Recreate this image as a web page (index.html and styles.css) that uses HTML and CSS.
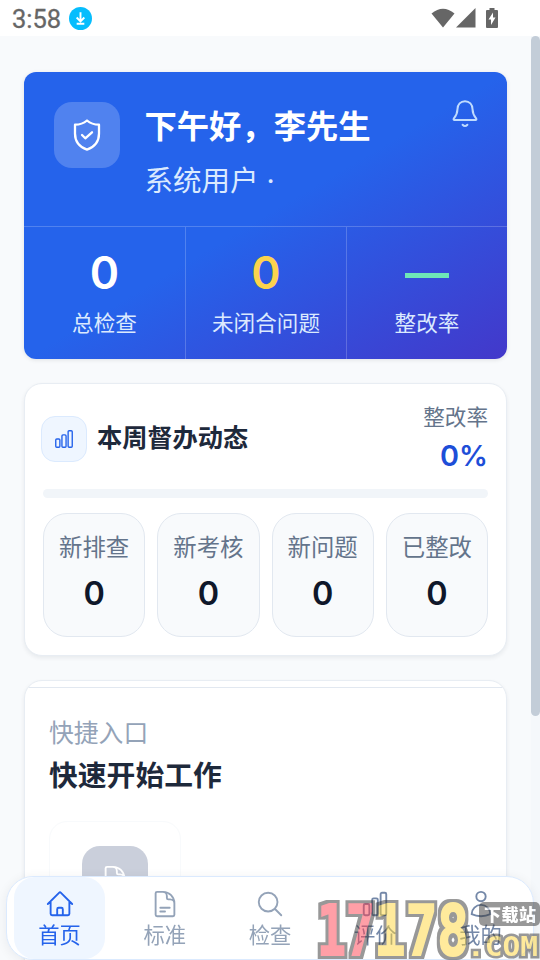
FILE: index.html
```html
<!DOCTYPE html>
<html lang="zh-CN">
<head>
<meta charset="utf-8">
<title>首页</title>
<link rel="stylesheet" href="styles.css">
</head>
<body>
<svg class="defs" width="0" height="0">
  <symbol id="chart" viewBox="0 0 24 24"><path d="M3 13.125C3 12.504 3.504 12 4.125 12h2.25c.621 0 1.125.504 1.125 1.125v6.75C7.5 20.496 6.996 21 6.375 21h-2.25A1.125 1.125 0 0 1 3 19.875v-6.75ZM9.75 8.625c0-.621.504-1.125 1.125-1.125h2.25c.621 0 1.125.504 1.125 1.125v11.25c0 .621-.504 1.125-1.125 1.125h-2.25a1.125 1.125 0 0 1-1.125-1.125V8.625ZM16.5 4.125c0-.621.504-1.125 1.125-1.125h2.25C20.496 3 21 3.504 21 4.125v15.75c0 .621-.504 1.125-1.125 1.125h-2.25a1.125 1.125 0 0 1-1.125-1.125V4.125Z"/></symbol>
  <symbol id="document" viewBox="0 0 24 24"><path d="M19.5 14.25v-2.625a3.375 3.375 0 0 0-3.375-3.375h-1.5A1.125 1.125 0 0 1 13.5 7.125v-1.5a3.375 3.375 0 0 0-3.375-3.375H8.25m0 12.75h7.5m-7.5 3H12M10.5 2.25H5.625c-.621 0-1.125.504-1.125 1.125v17.25c0 .621.504 1.125 1.125 1.125h12.75c.621 0 1.125-.504 1.125-1.125V11.25a9 9 0 0 0-9-9Z"/></symbol>
</svg>

<header class="status">
  <span class="time">3:58</span>
  <svg class="download" viewBox="0 0 24 24"><circle cx="12" cy="12" r="12"/><path d="M12 5.5v9M8 11l4 4 4-4M8 17.5h8"/></svg>
  <div class="signals">
    <svg width="24" height="20" viewBox="0 0 24 20"><path d="M0.500 5.500Q12-4 23.500 5.500L12 19.500Z"/></svg>
    <svg width="20" height="20" viewBox="0 0 20 20"><path d="M0 19.500 19.500 0v19.500Z"/></svg>
    <svg class="battery" width="12" height="20" viewBox="0 0 12 20"><path fill-rule="evenodd" d="M3.500 0h5v2H11q1 0 1 1v16q0 1-1 1H1q-1 0-1-1V3q0-1 1-1h2.500ZM7 4.500 2.500 11.500H5V17L9.500 9.500H7Z"/></svg>
  </div>
</header>

<main class="page">
  <section class="hero">
    <div class="welcome">
      <div class="shield">
        <svg class="icon" viewBox="0 0 36 36"><path d="M18 3.500C14.500 6.500 11 7.700 6 7.700V16.500C6 24 10.500 30 18 32.600C25.500 30 30 24 30 16.500V7.700C25 7.700 21.500 6.500 18 3.500ZM13 18l3.300 3.300L23 15.300"/></svg>
      </div>
      <div class="greeting"><h1>下午好，李先生</h1><p>系统用户 ·</p></div>
      <svg class="icon bell" viewBox="0 0 30 30"><path d="M15 2.200C10.500 2.200 7.700 5.500 7.500 10C7.400 14.500 6.500 16.300 3.900 19.300Q3 20.900 4.600 20.900H25.400Q27 20.900 26.100 19.300C23.500 16.300 22.600 14.500 22.500 10C22.300 5.500 19.500 2.200 15 2.200ZM12.600 25.700Q15 28.300 17.400 25.700"/></svg>
    </div>
    <div class="stats">
      <div><b>0</b><span>总检查</span></div>
      <div><b class="amber">0</b><span>未闭合问题</span></div>
      <div><b class="green"><i></i></b><span>整改率</span></div>
    </div>
  </section>

  <section class="card weekly">
    <div class="weekly-head">
      <div class="chip"><svg class="icon"><use href="#chart"/></svg></div>
      <h2>本周督办动态</h2>
      <div class="rate"><span>整改率</span><b>0%</b></div>
    </div>
    <div class="progress"></div>
    <div class="tiles">
      <div><span>新排查</span><b>0</b></div>
      <div><span>新考核</span><b>0</b></div>
      <div><span>新问题</span><b>0</b></div>
      <div><span>已整改</span><b>0</b></div>
    </div>
  </section>

  <section class="card quick">
    <div class="quick-body">
      <p>快捷入口</p>
      <h2>快速开始工作</h2>
      <div class="entry"><div class="entry-icon"><svg class="icon"><use href="#document"/></svg></div></div>
    </div>
  </section>
</main>
<div class="scroll-track"><div class="thumb"></div></div>

<nav class="tabs">
  <a class="active"><svg class="icon" viewBox="0 0 24 24"><path d="m2.250 12 8.954-8.955c.440-.439 1.152-.439 1.591 0L21.750 12M4.500 9.750v10.125c0 .621.504 1.125 1.125 1.125H9.750v-4.875c0-.621.504-1.125 1.125-1.125h2.250c.621 0 1.125.504 1.125 1.125V21h4.125c.621 0 1.125-.504 1.125-1.125V9.750M9.750 21h4.500"/></svg>首页</a>
  <a><svg class="icon"><use href="#document"/></svg>标准</a>
  <a><svg class="icon" viewBox="0 0 24 24"><path d="m21 21-5.197-5.197m0 0A7.500 7.500 0 1 0 5.196 5.196a7.500 7.500 0 0 0 10.607 10.607Z"/></svg>检查</a>
  <a class="dark"><svg class="icon"><use href="#chart"/></svg>评价</a>
  <a class="dark"><svg class="icon" viewBox="0 0 24 24"><path d="M15.750 6a3.750 3.750 0 1 1-7.500 0 3.750 3.750 0 0 1 7.500 0ZM4.501 20.118a7.500 7.500 0 0 1 14.998 0A17.933 17.933 0 0 1 12 21.750c-2.676 0-5.216-.584-7.499-1.632Z"/></svg>我的</a>
</nav>

<svg class="watermark" width="224" height="60" viewBox="316 900 224 60">
  <filter id="outline" x="-10%" y="-10%" width="120%" height="120%" color-interpolation-filters="sRGB">
    <feMorphology in="SourceAlpha" operator="dilate" radius="3"/>
    <feComponentTransfer result="edge"><feFuncR type="linear" slope="0" intercept=".2"/><feFuncG type="linear" slope="0" intercept=".2"/><feFuncB type="linear" slope="0" intercept=".2"/></feComponentTransfer>
    <feMerge><feMergeNode in="edge"/><feMergeNode in="SourceGraphic"/></feMerge>
  </filter>
  <rect x="479" y="902" width="61" height="24" rx="5" fill="#333"/>
  <g filter="url(#outline)">
    <g class="digits">
      <text x="317" y="955" textLength="58" lengthAdjust="spacingAndGlyphs" class="red">17</text>
      <text x="374" y="955" textLength="95" lengthAdjust="spacingAndGlyphs" class="yellow">178</text>
    </g>
  </g>
  <text class="site" x="484" y="921" textLength="52" fill="#fff">下载站</text>
  <g class="domain"><text x="467" y="956" textLength="71" lengthAdjust="spacingAndGlyphs">.COM</text></g>
</svg>
</body>
</html>
```
FILE: styles.css
```css
* { box-sizing: border-box; }
body {
  margin: 0;
  height: 960px;
  overflow: hidden;
  background: #f8fafc;
  font-family: Inter, "Noto Sans CJK SC", sans-serif;
  color: #1e293b;
}
h1, h2, p { margin: 0; }
.defs { position: absolute; }
.icon { display: block; fill: none; stroke: currentColor; stroke-width: 1.5; stroke-linecap: round; stroke-linejoin: round; }

.status { height: 36px; background: #fff; display: flex; align-items: center; padding: 0 42px 0 12px; }
.time { font: 400 25.500px/36px Roboto, sans-serif; color: #666; width: 57px; padding-top: 2px; -webkit-text-stroke: .3px #666; }
.download { width: 23px; height: 23px; fill: #06bdfd; }
.download path { fill: none; stroke: #fff; stroke-width: 2; }
.signals { margin-left: auto; display: flex; fill: #666; gap: 1px; height: 20px; margin-top: -1px; }
.battery { margin-left: 9px; }

.page { height: 924px; overflow: hidden; padding: 36px 33px 0 24px; display: flex; flex-direction: column; }
.hero {
  flex: none;
  height: 287px;
  border-radius: 12px;
  overflow: hidden;
  color: #fff;
  background: linear-gradient(to bottom right, #2563eb, #2563eb 50%, #4338ca);
  box-shadow: 0 1px 4px #0000001a;
}
.welcome { display: flex; height: 154px; padding: 30px 27px 0 30px; }
.shield { width: 66px; height: 66px; border-radius: 18px; background: #ffffff33; display: grid; place-items: center; }
.shield .icon { width: 36px; height: 36px; stroke-width: 2.300; }
.greeting { flex: 1; padding-left: 24.500px; }
h1 { font-size: 32.300px; line-height: 48px; font-weight: 700; white-space: nowrap; margin-top: 1px; }
.greeting p { font-size: 28.500px; line-height: 42px; margin-top: 9px; color: #dbeafe; }
.bell { width: 30px; height: 30px; margin-top: -3px; color: #bfdbfe; stroke-width: 2; }
.stats { display: grid; grid-template-columns: repeat(3, 1fr); height: 133px; border-top: 1px solid #ffffff33; }
.stats div { display: flex; flex-direction: column; align-items: center; padding-top: 19px; }
.stats div + div { border-left: 1px solid #ffffff33; }
.stats b { font-size: 44.500px; line-height: 54px; height: 54px; font-weight: 600; }
.stats span { font-size: 21.600px; line-height: 32px; margin-top: 7px; color: #dbeafe; }
.stats .amber { color: #fcd34d; }
.stats .green { display: flex; align-items: center; }
.green i { width: 44px; height: 5px; margin-top: 4px; background: #6ee7b7; }

.card { flex: none; margin-top: 24px; background: #fff; border: 1px solid #e8edf3; border-radius: 18px; box-shadow: 0 2px 4px #0f172a12; }
.weekly { height: 273px; padding: 17px 18px 0; }
.weekly-head { display: flex; height: 71px; }
.chip { width: 46px; height: 46px; margin: 15px 10px 0 -2px; border: 1.500px solid #dbeafe; border-radius: 14px; background: #eff6ff; color: #2563eb; display: grid; place-items: center; }
.chip .icon { width: 22px; height: 22px; }
.weekly h2 { font-size: 25.200px; line-height: 36px; margin-top: 19px; font-weight: 700; }
.rate { margin-left: auto; display: flex; flex-direction: column; align-items: flex-end; }
.rate span { font-size: 21.600px; line-height: 32px; color: #64748b; }
.rate b { font-size: 28.800px; line-height: 40px; margin-top: 3px; color: #1d4ed8; font-weight: 600; }
.progress { height: 9px; border-radius: 5px; background: #f1f5f9; margin-top: 17px; }
.tiles { display: grid; grid-template-columns: repeat(4, 1fr); gap: 12px; margin-top: 15px; }
.tiles div { height: 124px; border: 1px solid #e2e8f0; border-radius: 24px; background: #f8fafc; display: flex; flex-direction: column; align-items: center; padding-top: 16px; }
.tiles span { font-size: 23.400px; line-height: 36px; color: #64748b; }
.tiles b { font-size: 32.400px; line-height: 44px; margin-top: 6px; color: #0f172a; font-weight: 600; }
.quick { height: 420px; overflow: hidden; padding-top: 6px; }
.quick-body { border-top: 1px solid #e2e8f0; padding: 26px 24px; }
.quick p { font-size: 24.800px; line-height: 38px; color: #94a3b8; }
.quick h2 { font-size: 28.800px; line-height: 42px; margin-top: 3px; font-weight: 700; }
.entry { width: 132px; height: 190px; margin-top: 24px; padding-top: 24px; border: 1px solid #f8fafc; border-radius: 18px; }
.entry-icon { width: 66px; height: 66px; margin: 0 auto; border-radius: 18px; background: #cacfdb; color: #fff; display: grid; place-items: center; }
.entry-icon .icon { width: 30px; height: 30px; }

.scroll-track { position: fixed; top: 36px; right: 0; bottom: 0; width: 9px; background: #f5f8fb; }
.thumb { height: 680px; border-radius: 5px; background: #c3cdd8; }

.tabs { position: fixed; left: 6px; right: 6px; bottom: 0; height: 84px; display: flex; justify-content: space-between; padding: 0 7px; background: #fff; border: 1px solid #dbeafe; border-radius: 27px; box-shadow: 0 2px 12px #0f172a12; }
.tabs a { width: 91px; border-radius: 21px; display: flex; flex-direction: column; align-items: center; padding-top: 12px; font-size: 21.300px; line-height: 32px; color: #94a3b8; }
.tabs .icon { width: 30px; height: 30px; }
.tabs .active { background: #eff6ff; color: #2563eb; }
.tabs .dark { color: #7488a8; }

.watermark { position: fixed; right: 0; bottom: 0; opacity: .5; overflow: visible; }
.digits { font: 700 70px "DejaVu Sans Mono", monospace; stroke-width: 2px; }
.red { fill: #ff4050; stroke: #ff4050; }
.yellow { fill: #ffd63a; stroke: #ffd63a; }
.site { font: 900 17px "Noto Sans CJK SC", sans-serif; }
.domain { font: 700 27px "DejaVu Sans Mono", monospace; fill: #ffd63a; stroke: #333; stroke-width: 5px; paint-order: stroke; }
```
